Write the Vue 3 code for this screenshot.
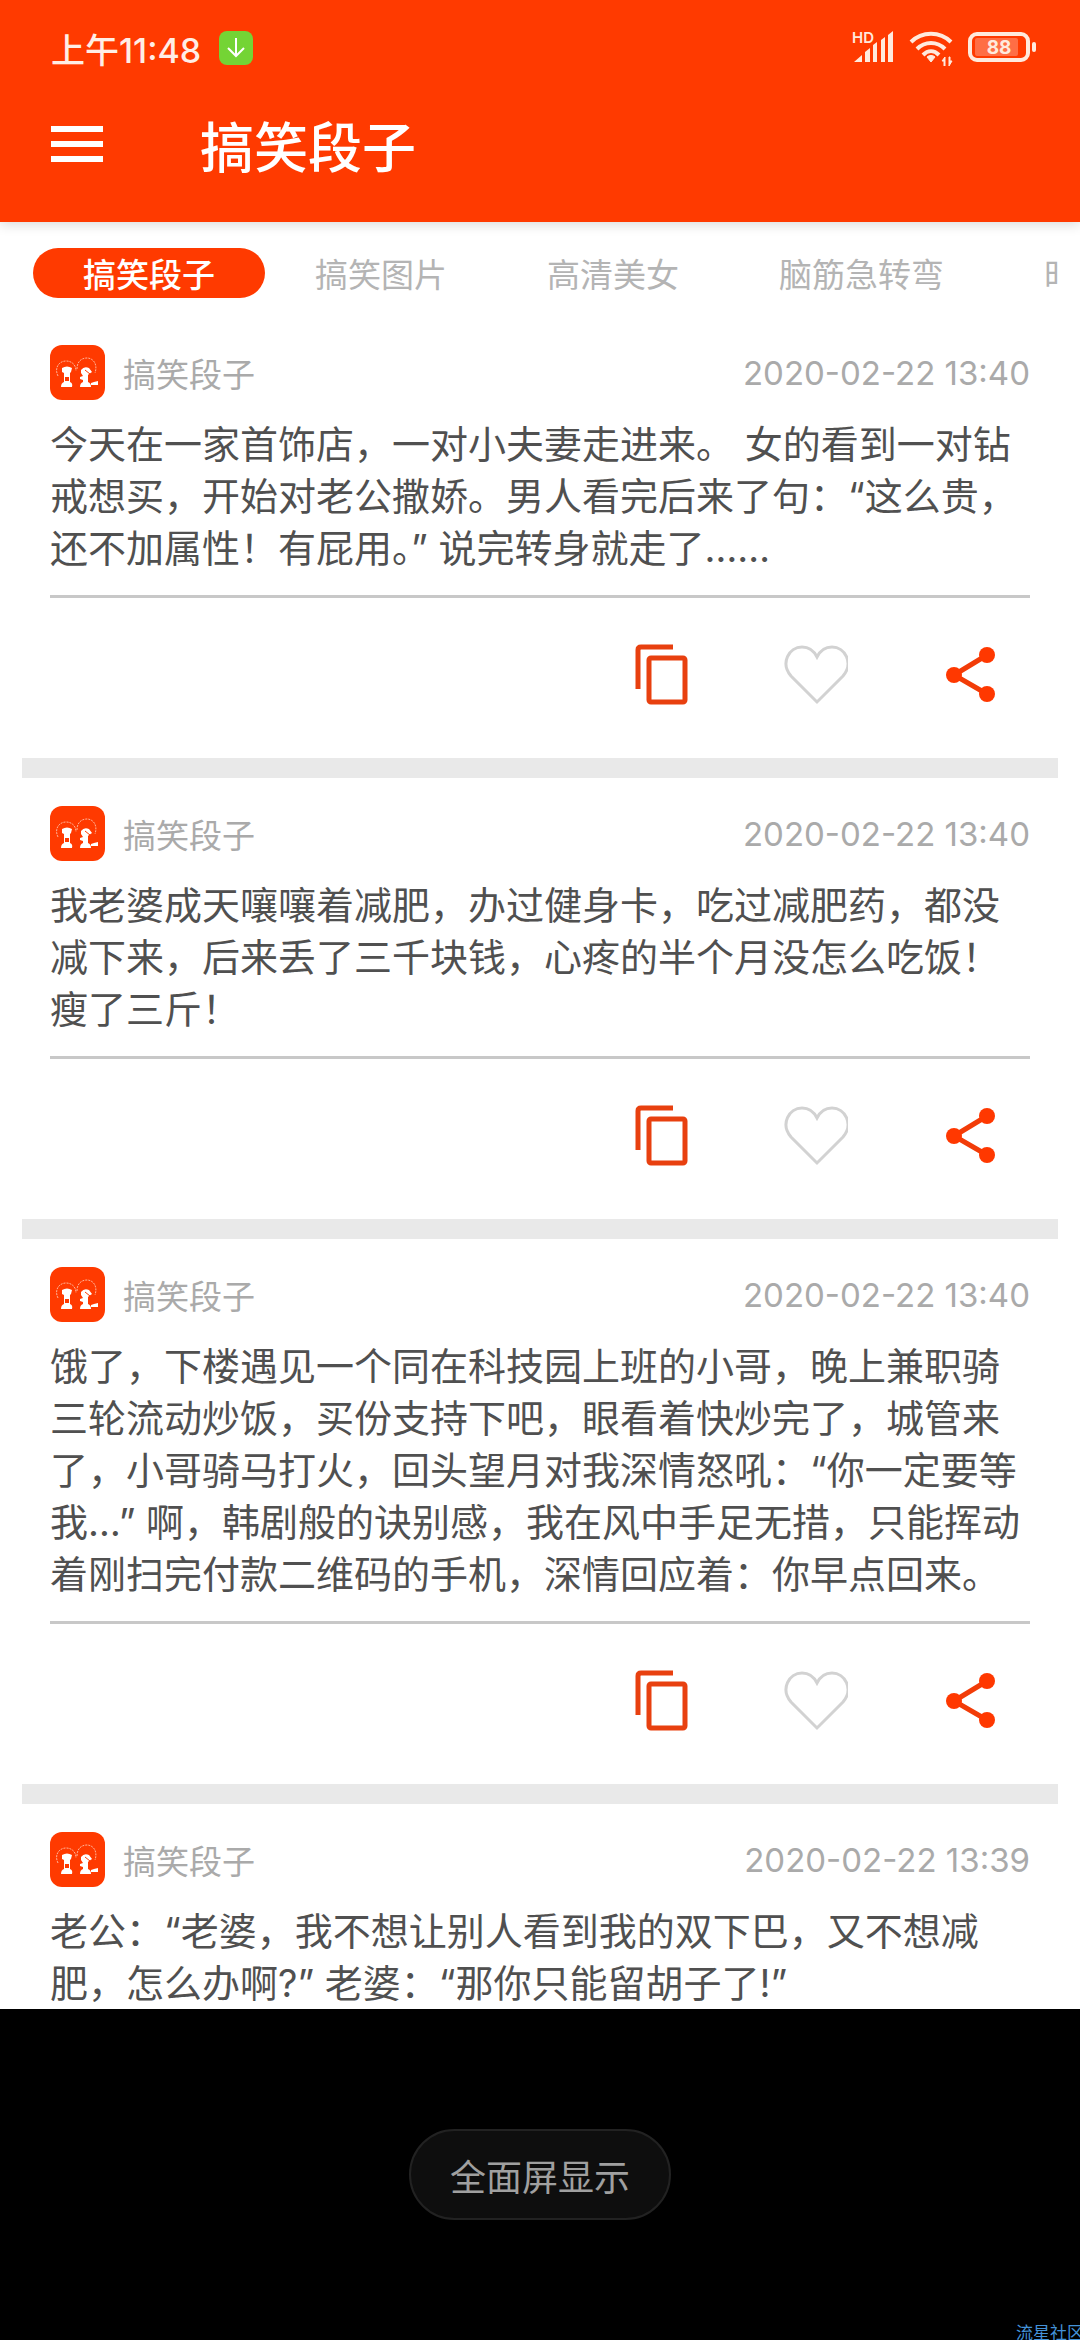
<script setup>
import { ref } from 'vue'

const tabs = ['搞笑段子', '搞笑图片', '高清美女', '脑筋急转弯', '时']
const active = ref(0)

const posts = [
  {
    author: '搞笑段子',
    time: '2020-02-22 13:40',
    text: '今天在一家首饰店，一对小夫妻走进来。 女的看到一对钻\n戒想买，开始对老公撒娇。男人看完后来了句：“这么贵，\n还不加属性！有屁用。” 说完转身就走了……',
  },
  {
    author: '搞笑段子',
    time: '2020-02-22 13:40',
    text: '我老婆成天嚷嚷着减肥，办过健身卡，吃过减肥药，都没\n减下来，后来丢了三千块钱，心疼的半个月没怎么吃饭！\n瘦了三斤！',
  },
  {
    author: '搞笑段子',
    time: '2020-02-22 13:40',
    text: '饿了，下楼遇见一个同在科技园上班的小哥，晚上兼职骑\n三轮流动炒饭，买份支持下吧，眼看着快炒完了，城管来\n了，小哥骑马打火，回头望月对我深情怒吼：“你一定要等\n我…” 啊，韩剧般的诀别感，我在风中手足无措，只能挥动\n着刚扫完付款二维码的手机，深情回应着：你早点回来。',
  },
  {
    author: '搞笑段子',
    time: '2020-02-22 13:39',
    text: '老公：“老婆，我不想让别人看到我的双下巴，又不想减\n肥，怎么办啊?” 老婆：“那你只能留胡子了!”',
  },
]
</script>

<template>
  <div class="app">
    <header class="top">
      <div class="status">
        <span class="clock">上午11:48</span>
        <svg class="download" viewBox="0 0 34 34" aria-hidden="true">
          <rect width="34" height="34" rx="8" fill="#74d435" />
          <path d="M17 7v17M9 17l8 8 8-8" fill="none" stroke="#fff" stroke-width="2" />
        </svg>
        <svg class="signals" viewBox="0 0 186 36" aria-hidden="true">
          <g fill="#ffeadd">
            <text x="1" y="13" font-size="15" font-weight="600">HD</text>
            <path d="M3 32l8-7v7zM14 22l5-4v14h-5zM22 15l4-3v20h-4zM30 10l4-3v25h-4zM37 5l5-4v31h-5z" />
            <path d="M76 27l4 5 4-5c-2-2-6-2-8 0z" stroke="#ffeadd" stroke-width="1" />
            <path d="M94 27l-3 4h2v5h1zM98 36l3-5h-2v-4h-1z" stroke="#ffeadd" stroke-width="1" />
            <rect x="181" y="12" width="4" height="10" rx="2" />
          </g>
          <g fill="none" stroke="#ffeadd" stroke-width="4">
            <path d="M60 12c11-11 29-11 40 0" />
            <path d="M66 19c8-8 20-8 28 0" />
            <path d="M72 25c5-5 11-5 16 0" />
            <rect x="119" y="4" width="58" height="26" rx="7" />
          </g>
          <rect x="124" y="8" width="43" height="18" rx="2" fill="#ff6e45" />
          <text x="148" y="24" font-size="19" font-weight="700" text-anchor="middle" fill="#ffeadd">88</text>
        </svg>
      </div>
      <div class="bar">
        <button class="menu" aria-label="菜单"><i></i><i></i><i></i></button>
        <h1>搞笑段子</h1>
      </div>
    </header>

    <nav class="tabs">
      <button
        v-for="(tab, i) in tabs"
        :key="tab"
        :class="['tab', { on: i === active }]"
        @click="active = i"
      >{{ tab }}</button>
    </nav>

    <main class="feed">
      <article v-for="(post, i) in posts" :key="i" class="post">
        <div class="head">
          <svg class="avatar" viewBox="0 0 55 55" aria-hidden="true">
            <rect width="55" height="55" rx="12" fill="#ff3a00" />
            <g fill="none" stroke="#ffb59a" stroke-width="1" stroke-dasharray="2 1">
              <path d="M8 31c-4-8 1-15 8-15 6 0 10 4 10 10" />
              <path d="M27 24c0-7 4-11 10-11s11 6 8 15" />
            </g>
            <g fill="#fff">
              <path d="M12 23q5-3 10 0l-1 4-1 1v9q3 1 2 5H11q0-4 3-5v-9l-2-1z" />
              <path d="M31 25q3-4 8-2l3 4-3 2-1 1v7q3 1 3 5H30q0-4 3-5v-2l-3-1v-2l3-1-2-3z" />
              <path d="M41 38l3-1 4-1v4h-7z" />
            </g>
            <path d="M15 32h4v4h-4z" fill="#ff3a00" />
            <path d="M35 25l5 4" stroke="#ff3a00" stroke-width="1" />
          </svg>
          <span class="author">{{ post.author }}</span>
          <time>{{ post.time }}</time>
        </div>
        <p class="body">{{ post.text }}</p>
        <div class="actions">
          <button aria-label="复制">
            <svg viewBox="0 0 64 64">
              <g fill="none" stroke="#e8400f">
                <path d="M8 47V8q0-3 3-3h32" stroke-width="5" />
                <rect x="19" y="16" width="36" height="44" rx="2" stroke-width="5" />
              </g>
            </svg>
          </button>
          <button aria-label="喜欢">
            <svg viewBox="0 0 64 64">
              <path d="M33 60L7 34C-4 21 5 5 18 5c7 0 12 4 15 10 3-6 8-10 15-10 13 0 22 16 11 29z" fill="none" stroke="#d2d2d2" stroke-width="3" />
            </svg>
          </button>
          <button aria-label="分享">
            <svg viewBox="0 0 64 64">
              <path d="M49 13L16 33l33 19" fill="none" stroke="#f23c08" stroke-width="5" />
              <g fill="#ff3800"><circle cx="49" cy="13" r="8" /><circle cx="16" cy="33" r="8" /><circle cx="49" cy="52" r="8" /></g>
            </svg>
          </button>
        </div>
      </article>
    </main>

    <footer class="bottom">
      <button class="full">全面屏显示</button>
      <span class="mark">流星社区</span>
    </footer>
  </div>
</template>

<style>
body {
  margin: 0;
}
</style>

<style scoped>
.app {
  display: flex;
  flex-direction: column;
  height: 100vh;
  overflow: hidden;
  background: #fff;
  color: #505050;
  font-family: Inter, "Noto Sans CJK SC", sans-serif;
}
button {
  padding: 0;
  border: 0;
  background: none;
  font-family: inherit;
  cursor: pointer;
}
svg {
  display: block;
}
h1,
.author,
.tab,
.full {
  font-family: "Noto Sans CJK SC", sans-serif;
}
.top {
  position: relative;
  flex: none;
  padding: 0 43px 30px 51px;
  background: #ff3a00;
  color: #fff;
  box-shadow: 0 2px 12px rgba(0, 0, 0, 0.16);
}
.status {
  display: flex;
  align-items: center;
  height: 96px;
}
.clock {
  color: #ffeee6;
  font-size: 34px;
  font-weight: 500;
}
.download {
  width: 34px;
  height: 34px;
  margin-left: 18px;
}
.signals {
  width: 186px;
  height: 36px;
  margin-left: auto;
}
.bar {
  display: flex;
  align-items: center;
  height: 96px;
  gap: 97px;
}
.menu {
  display: flex;
  flex-direction: column;
  gap: 9px;
  width: 52px;
}
.menu i {
  height: 6px;
  background: #fff;
}
h1 {
  margin: 0;
  font-size: 54px;
  font-weight: 500;
}
.tabs {
  display: flex;
  flex: none;
  margin: 0 22px;
  padding: 26px 0 19px 11px;
  overflow: hidden;
}
.tab {
  flex: none;
  height: 50px;
  padding: 0 50px;
  border-radius: 25px;
  color: #b4b4b4;
  font-size: 33px;
  line-height: 50px;
}
.tab.on {
  background: #ff3a00;
  color: #fff;
  font-weight: 500;
}
.feed {
  flex: 1;
  min-height: 0;
  padding: 0 22px;
  overflow: hidden;
}
.post {
  padding: 28px 28px 0;
  border-bottom: 20px solid #e9e9e9;
}
.head {
  display: flex;
  align-items: center;
  height: 55px;
  color: #aaa;
}
.avatar {
  width: 55px;
  height: 55px;
}
.author {
  margin-left: 18px;
  font-size: 33px;
}
time {
  margin-left: auto;
  font-size: 33px;
}
.body {
  margin: 18px 0 21px;
  font-size: 38px;
  line-height: 52px;
  white-space: pre-line;
}
.actions {
  display: flex;
  justify-content: flex-end;
  align-items: center;
  gap: 90px;
  height: 152px;
  padding: 0 28px 8px 0;
  border-top: 3px solid #c8c8c8;
}
.actions svg {
  width: 64px;
  height: 64px;
}
.bottom {
  position: relative;
  display: flex;
  flex: none;
  justify-content: center;
  align-items: flex-start;
  height: 211px;
  padding-top: 120px;
  overflow: hidden;
  background: #000;
}
.full {
  height: 91px;
  padding: 0 39px;
  border: 2px solid #222;
  border-radius: 46px;
  background: #0e0e0e;
  color: #a0a0a0;
  font-size: 36px;
}
.mark {
  position: absolute;
  right: -4px;
  bottom: -2px;
  color: #4492d8;
  font-size: 17px;
  line-height: 18px;
}
</style>
